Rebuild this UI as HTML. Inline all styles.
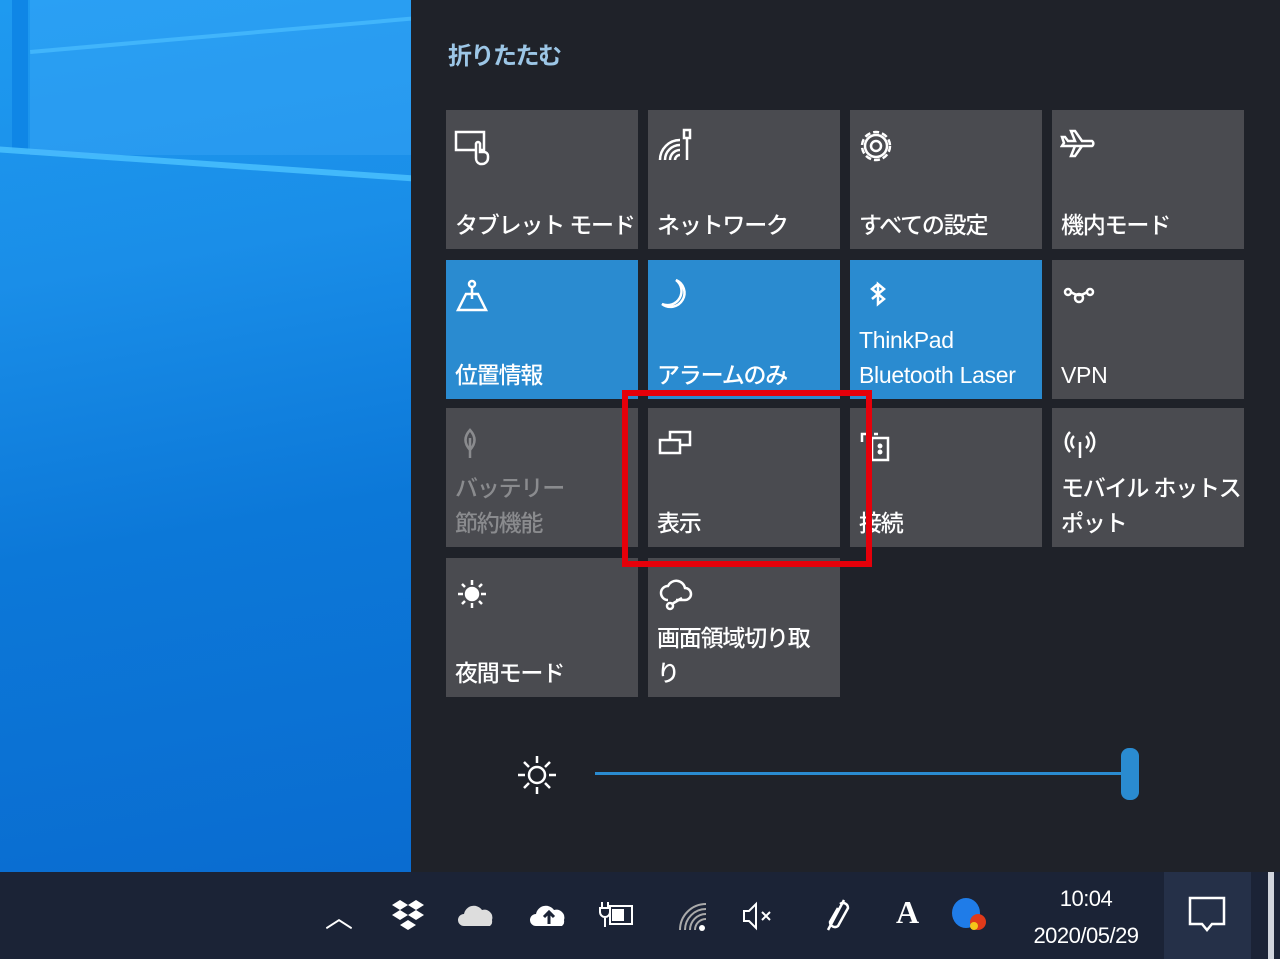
<!DOCTYPE html>
<html><head><meta charset="utf-8"><style>
*{margin:0;padding:0;box-sizing:border-box}
body{width:1280px;height:959px;overflow:hidden;position:relative;background:#1f2229;font-family:"Liberation Sans","Noto Sans CJK JP",sans-serif}
#desk{position:absolute;left:0;top:0;width:411px;height:872px;background:linear-gradient(170deg,#1e9af0 0%,#1a8ee8 30%,#0c78d8 60%,#0a6cd0 100%);overflow:hidden}
#panel{position:absolute;left:411px;top:0;width:869px;height:872px;background:#1f2229}
.t{position:absolute;width:192px;height:139px;background:#4a4b50;color:#fff}
.b{background:#2a8bd0}
.t svg{position:absolute;left:8px;top:16px}
.l{position:absolute;left:9px;bottom:6px;font-size:23px;line-height:35px;white-space:nowrap;letter-spacing:-1.2px;font-weight:500}
.lat{letter-spacing:-0.3px}
.dim{color:#8a8b8e}
#task{position:absolute;left:0;top:872px;width:1280px;height:87px;background:#1b2336}
.ti{position:absolute;top:898px;color:#fff}
</style></head><body>
<div id="desk">
<div style="position:absolute;left:12px;top:0;width:16px;height:150px;background:#0f86e6"></div>
<div style="position:absolute;left:-50px;top:143px;width:520px;height:6px;background:#4cc3ff;transform:rotate(4deg);transform-origin:0 0;opacity:.8"></div>
<div style="position:absolute;left:30px;top:50px;width:420px;height:4px;background:#4cc3ff;transform:rotate(-5deg);transform-origin:0 0;opacity:.7"></div>
<div style="position:absolute;left:30px;top:0;width:390px;height:155px;background:rgba(80,180,255,.25)"></div>
</div>
<div id="panel">
<div style="position:absolute;left:37px;top:36px;font-size:24px;color:#9cc6e6;letter-spacing:-1.5px;font-weight:bold">折りたたむ</div>
</div>

<div class="t" style="left:446px;top:110px"><svg width="40" height="40" viewBox="0 0 40 40" fill="none" stroke="#fff" stroke-width="2.5"><rect x="2" y="6" width="28" height="18"/><path d="M22 32v-14a2 2 0 014 0v8h4a4 4 0 014 4v2a6 6 0 01-6 6h-2a6 6 0 01-4-6z" fill="#4a4b50"/></svg><div class="l">タブレット モード</div></div>
<div class="t" style="left:648px;top:110px"><svg width="40" height="40" viewBox="0 0 40 40" fill="none" stroke="#fff" stroke-width="2.5"><path d="M4 34a20 20 0 0120-20M9 34a15 15 0 0115-15M14 34a10 10 0 0110-10M19 34a5 5 0 015-5"/><rect x="28" y="4" width="6" height="8"/><path d="M31 12v22"/></svg><div class="l">ネットワーク</div></div>
<div class="t" style="left:850px;top:110px"><svg width="40" height="40" viewBox="0 0 40 40" fill="none" stroke="#fff" stroke-width="2.5"><circle cx="18" cy="20" r="5"/><circle cx="18" cy="20" r="14" stroke-dasharray="6 3"/><circle cx="18" cy="20" r="11"/></svg><div class="l">すべての設定</div></div>
<div class="t" style="left:1052px;top:110px"><svg width="40" height="40" viewBox="0 0 40 40" fill="none" stroke="#fff" stroke-width="2.5"><path d="M2 20h30a3 3 0 000-5H22L15 5h-4l4 10H8l-3-4H2l2 6-2 3zM15 20l-4 10h4l7-10"/></svg><div class="l">機内モード</div></div>

<div class="t b" style="left:446px;top:260px"><svg width="40" height="40" viewBox="0 0 40 40" fill="none" stroke="#fff" stroke-width="2.5"><circle cx="18" cy="8" r="3"/><path d="M18 11v12M12 18h12l8 16H4z"/></svg><div class="l">位置情報</div></div>
<div class="t b" style="left:648px;top:260px"><svg width="40" height="40" viewBox="0 0 40 40" fill="none" stroke="#fff" stroke-width="2.5"><path d="M20 4a14 14 0 01-14 24a14 14 0 1014-24z"/></svg><div class="l">アラームのみ</div></div>
<div class="t b" style="left:850px;top:260px"><svg width="40" height="40" viewBox="0 0 40 40" fill="none" stroke="#fff" stroke-width="2.5"><path d="M20 8l-6 5 12 10-6 5V8l6 5-12 10"/></svg><div class="l lat">ThinkPad<br>Bluetooth Laser</div></div>
<div class="t" style="left:1052px;top:260px"><svg width="40" height="40" viewBox="0 0 40 40" fill="none" stroke="#fff" stroke-width="2.5"><circle cx="8" cy="16" r="3"/><circle cx="30" cy="16" r="3"/><path d="M11 16q8 6 16 0"/><circle cx="19" cy="22" r="4"/></svg><div class="l lat">VPN</div></div>

<div class="t" style="left:446px;top:408px"><svg width="40" height="40" viewBox="0 0 40 40" fill="none" stroke="#8a8b8e" stroke-width="2.5"><path d="M16 6q-9 10 0 20q9-10 0-20zM16 14v20"/></svg><div class="l dim">バッテリー<br>節約機能</div></div>
<div class="t" style="left:648px;top:408px"><svg width="40" height="40" viewBox="0 0 40 40" fill="none" stroke="#fff" stroke-width="2.5"><rect x="14" y="8" width="20" height="13"/><rect x="4" y="16" width="20" height="13" fill="#4a4b50"/></svg><div class="l">表示</div></div>
<div class="t" style="left:850px;top:408px"><svg width="40" height="40" viewBox="0 0 40 40" fill="none" stroke="#fff" stroke-width="2.5"><path d="M4 18v-8h6M16 10h4"/><rect x="14" y="14" width="16" height="22"/><circle cx="22" cy="22" r="1.2"/><circle cx="22" cy="28" r="1.2"/></svg><div class="l">接続</div></div>
<div class="t" style="left:1052px;top:408px"><svg width="40" height="40" viewBox="0 0 40 40" fill="none" stroke="#fff" stroke-width="2.5"><path d="M20 18v16M14 12a8 8 0 000 12M26 12a8 8 0 010 12M10 8a14 14 0 000 20M30 8a14 14 0 010 20"/></svg><div class="l">モバイル ホットス<br>ポット</div></div>

<div class="t" style="left:446px;top:558px"><svg width="40" height="40" viewBox="0 0 40 40" fill="none" stroke="#fff" stroke-width="2.5"><circle cx="18" cy="20" r="6" fill="#fff"/><path d="M18 6v5M18 29v5M4 20h5M27 20h5M8 10l3 3M25 27l3 3M28 10l-3 3M11 27l-3 3"/></svg><div class="l">夜間モード</div></div>
<div class="t" style="left:648px;top:558px"><svg width="40" height="40" viewBox="0 0 40 40" fill="none" stroke="#fff" stroke-width="2.5"><path d="M12 26a7 7 0 010-14a9 9 0 0117 2a6 6 0 010 12H20"/><circle cx="14" cy="32" r="3"/><path d="M16 30l10-6"/></svg><div class="l">画面領域切り取<br>り</div></div>

<div style="position:absolute;left:622px;top:390px;width:250px;height:177px;border:6px solid #e5000a"></div>

<svg style="position:absolute;left:514px;top:752px" width="46" height="46" viewBox="0 0 46 46" fill="none" stroke="#fff" stroke-width="2.5"><circle cx="23" cy="23" r="8"/><path d="M23 4v7M23 35v7M4 23h7M35 23h7M10 10l5 5M31 31l5 5M36 10l-5 5M15 31l-5 5"/></svg>
<div style="position:absolute;left:595px;top:772px;width:535px;height:3px;background:#2a8bd0"></div>
<div style="position:absolute;left:1121px;top:748px;width:18px;height:52px;border-radius:8px;background:#2a8bd0"></div>

<div id="task"></div>
<div class="ti" style="left:325px;top:896px;font-size:28px">︿</div>
<svg style="position:absolute;left:390px;top:898px" width="36" height="36" viewBox="0 0 36 36" fill="#fff"><path d="M10 2l8 5-8 5-8-5zM26 2l8 5-8 5-8-5zM10 12l8 5-8 5-8-5zM26 12l8 5-8 5-8-5zM18 22l8 5-8 5-8-5z"/></svg>
<svg style="position:absolute;left:458px;top:900px" width="40" height="30" viewBox="0 0 40 30" fill="#ddd"><path d="M6 26a6 6 0 010-12a10 10 0 0118-4a8 8 0 0110 10a6 6 0 01-2 6z"/></svg>
<svg style="position:absolute;left:530px;top:898px" width="40" height="32" viewBox="0 0 40 32"><path fill="#fff" d="M6 28a6 6 0 010-12a10 10 0 0118-4a8 8 0 0110 10a6 6 0 01-2 6z"/><path d="M19 26v-12M14 19l5-5 5 5" stroke="#1b2336" stroke-width="3" fill="none"/></svg>
<svg style="position:absolute;left:598px;top:900px" width="40" height="30" viewBox="0 0 40 30" fill="none" stroke="#fff" stroke-width="2"><rect x="12" y="6" width="22" height="18"/><rect x="15" y="10" width="10" height="10" fill="#fff"/><path d="M4 2v6M10 2v6M2 8h10v4a5 5 0 01-10 0zM7 17v10"/></svg>
<svg style="position:absolute;left:676px;top:900px" width="32" height="32" viewBox="0 0 32 32" fill="none" stroke="#aaa" stroke-width="2"><path d="M4 30a26 26 0 0126-26M9 30a21 21 0 0121-21M14 30a16 16 0 0116-16M19 30a11 11 0 0111-11"/><circle cx="26" cy="28" r="3" fill="#fff" stroke="none"/></svg>
<svg style="position:absolute;left:740px;top:900px" width="40" height="32" viewBox="0 0 40 32" fill="none" stroke="#fff" stroke-width="2"><path d="M4 11h5l7-7v24l-7-7H4zM22 12l8 8M30 12l-8 8"/></svg>
<svg style="position:absolute;left:818px;top:896px" width="40" height="40" viewBox="0 0 40 40" fill="none" stroke="#fff" stroke-width="2.5"><path d="M26 4l-16 30M22 8a5 5 0 018 4l-10 18a5 5 0 01-8-4l8-14"/></svg>
<div class="ti" style="left:896px;top:894px;font-size:32px;font-family:'Liberation Serif',serif;font-weight:bold">A</div>
<div style="position:absolute;left:952px;top:898px;width:28px;height:30px;border-radius:50%;background:#1f7ce8"></div>
<div style="position:absolute;left:970px;top:914px;width:16px;height:16px;border-radius:50%;background:#e03a1a"></div>
<div style="position:absolute;left:970px;top:922px;width:8px;height:8px;border-radius:50%;background:#f5c518"></div>
<div class="ti" style="left:1020px;top:880px;width:132px;text-align:center;font-size:22px;line-height:37px;letter-spacing:-0.5px">10:04<br>2020/05/29</div>
<div style="position:absolute;left:1164px;top:872px;width:87px;height:87px;background:#253048"></div>
<svg style="position:absolute;left:1188px;top:896px" width="40" height="40" viewBox="0 0 40 40" fill="none" stroke="#fff" stroke-width="2.5"><path d="M2 2h34v26H24l-5 6-5-6H2z"/></svg>
<div style="position:absolute;left:1268px;top:872px;width:6px;height:87px;background:#d0d4dc"></div>
</body></html>
